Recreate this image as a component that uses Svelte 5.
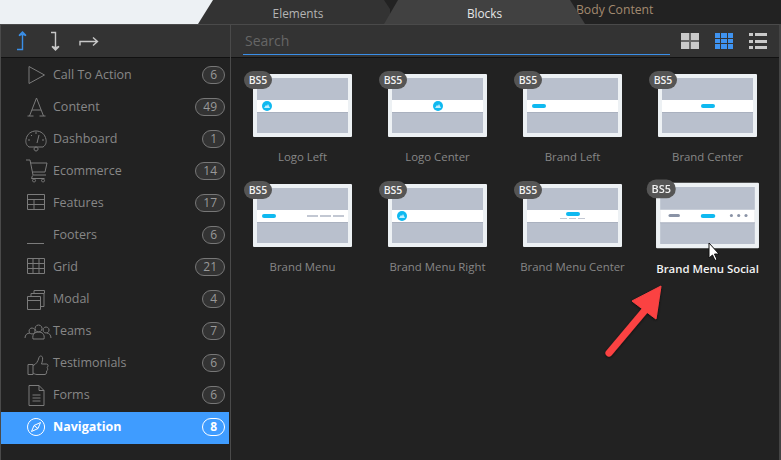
<script>
	const icons = {
		play: 'M5 3.500v17L20.500 12z',
		type: 'M3.500 21h6M15.500 21h6M5.500 21L12.500 3l7 18M8 15h9',
		gauge: 'M5 20h14c3-2 3.500-5 3-7.500C21 7 17 4 12 4S3 7 2 12.500c-.5 2.500 0 5.500 3 7.500zM12 20a2 2 0 1 0 .1 0M13 16l2-8M4 13h2M18 13h2M7 8l1 1M12 5v2',
		cart: 'M2 1h4l3 15h13M6.500 4H23l-2 9H8.500M10 20a1.500 1.500 0 1 0 .1 0zM19 20a1.500 1.500 0 1 0 .1 0zM8.500 16.500l-1 3h13',
		table: 'M3.500 3.500h17v15h-17zM3.500 8.500h17M3.500 13.500h17M10 8.500v10',
		footer: 'M3 20.500h17',
		grid: 'M3.500 3.500h17v15h-17zM3.500 8.500h17M3.500 13.500h17M9 3.500v15M15 3.500v15',
		modal: 'M3.500 9.500h13v13h-13zM3.500 13.500h13M7 9.500V6.500h13v13h-3.500M10 6.500V3.500h10.500v3',
		teams: 'M8 9a3 3 0 1 0 .1 0M14.500 6a3.500 3.500 0 1 0 .1 0M22 8a3 3 0 1 0 .1 0M1 19c0-3 2-5 5-5M9 20c-1-5 2-7 5.500-7s6.500 2 5.500 7zM23 14c2 0 4 2 4 5',
		thumb: 'M4 13.500h5v10H4zM9 14.500c3-1 5-4 6-8 .5-2 3-2 3.500 0 .5 2-.5 5-1 6.500h5c2 0 2 3 .5 3.500 1 1 1 3-.5 3.500.5 1.500 0 3-1.500 3.500H13c-2 0-3-1-4-1.500',
		file: 'M5 2.500h10l5 5v15H5zM15 2.500v5h5M8.500 12h8M8.500 15h8M8.500 18h8',
		compass: 'M12 3.500a8.500 8.500 0 1 0 .1 0zM16.500 7.500l-6.500 3-2.500 6 6.500-3zM10 10.500l4 3'
	};

	const groups = [
		{ name: 'Call To Action', count: 6, icon: 'play' },
		{ name: 'Content', count: 49, icon: 'type' },
		{ name: 'Dashboard', count: 1, icon: 'gauge' },
		{ name: 'Ecommerce', count: 14, icon: 'cart' },
		{ name: 'Features', count: 17, icon: 'table' },
		{ name: 'Footers', count: 6, icon: 'footer' },
		{ name: 'Grid', count: 21, icon: 'grid' },
		{ name: 'Modal', count: 4, icon: 'modal' },
		{ name: 'Teams', count: 7, icon: 'teams' },
		{ name: 'Testimonials', count: 6, icon: 'thumb' },
		{ name: 'Forms', count: 6, icon: 'file' },
		{ name: 'Navigation', count: 8, icon: 'compass', active: true }
	];

	const blocks = [
		{ name: 'Logo Left', kind: 'logo-left' },
		{ name: 'Logo Center', kind: 'logo-center' },
		{ name: 'Brand Left', kind: 'brand-left' },
		{ name: 'Brand Center', kind: 'brand-center' },
		{ name: 'Brand Menu', kind: 'brand-menu' },
		{ name: 'Brand Menu Right', kind: 'menu-right' },
		{ name: 'Brand Menu Center', kind: 'menu-center' },
		{ name: 'Brand Menu Social', kind: 'menu-social', hover: true }
	];
</script>

<div class="window">
	<div class="tabs">
		<div class="blank"></div>
		<div class="tab elements">Elements</div>
		<div class="tab blocks">Blocks</div>
		<div class="body-content">Body Content</div>
	</div>

	<div class="panel">
		<aside class="side">
			<div class="side-head">
				<svg width="24" height="22" viewBox="0 0 24 22" class="blue">
					<path d="M1 18.500h5.500V3M3 4.500L6.500 1 10 4.500 6.500 3z" />
				</svg>
				<svg width="24" height="22" viewBox="0 0 24 22">
					<path d="M2 1.500h4.500V18M3 15.500l3.500 3.500 3.500-3.500-3.500 1.500z" />
				</svg>
				<svg width="24" height="22" viewBox="0 0 24 22">
					<path d="M-2 14.500v-4h17.500M11 6.500l4.500 4-4.500 4" />
				</svg>
			</div>
			<ul>
				{#each groups as g}
					<li class:active={g.active}>
						<svg class="icon" width="28" height="24" viewBox="0 0 28 24"><path d={icons[g.icon]} /></svg>
						<span class="name">{g.name}</span>
						<span class="count">{g.count}</span>
					</li>
				{/each}
			</ul>
		</aside>

		<main>
			<div class="main-head">
				<div class="search">Search</div>
				<div class="views">
					<div class="view large"><i></i><i></i><i></i><i></i></div>
					<div class="view medium"><i></i><i></i><i></i><i></i><i></i><i></i><i></i><i></i><i></i></div>
					<div class="view list"><i></i><b></b><i></i><b></b><i></i><b></b></div>
				</div>
			</div>
			<div class="grid">
				{#each blocks as b}
					<div class="block" class:hover={b.hover}>
						<div class="thumb">
							<span class="bs">BS5</span>
							<div class="bar {b.kind}">
								{#if b.kind.startsWith('logo') || b.kind === 'menu-right'}
									<span class="logo">
										<svg width="6" height="4" viewBox="0 0 6 4"><path d="M0 4l2-3 1 1 1-2 2 4z" /></svg>
									</span>
								{:else if b.kind === 'menu-social'}
									<span class="pill grey"></span>
									<span class="pill"></span>
									<span class="dots"><i></i><i></i><i></i></span>
								{:else if b.kind === 'menu-center'}
									<span class="pill"></span>
									<span class="links"><i></i><i></i><i></i></span>
								{:else}
									<span class="pill"></span>
									{#if b.kind === 'brand-menu'}
										<span class="links"><i></i><i></i><i></i></span>
									{/if}
								{/if}
							</div>
						</div>
						<div class="label">{b.name}</div>
					</div>
				{/each}
			</div>
		</main>
	</div>

	<svg class="overlay" width="781" height="460" viewBox="0 0 781 460">
		<defs>
			<filter id="soft" x="-30%" y="-30%" width="160%" height="160%">
				<feDropShadow dx="0" dy="1" stdDeviation="1.500" flood-color="#000" flood-opacity="0.6" />
			</filter>
		</defs>
		<g filter="url(#soft)">
			<path d="M609 353L646 309" stroke="#fb4343" stroke-width="7" stroke-linecap="round" fill="none" />
			<path d="M661 286L632 301 656 319z" fill="#fb4343" stroke="#fb4343" stroke-width="1" stroke-linejoin="round" />
		</g>
		<path d="M709 243v15l3.500-3 2.500 5.500 2-1-2.500-5.500h4.500z" fill="#fff" stroke="#111" stroke-width="1" />
	</svg>
</div>

<style>
	:global(body) {
		background: #222;
	}

	.window {
		position: relative;
		width: 781px;
		height: 460px;
		overflow: hidden;
		background: #222;
		font-family: "Open Sans", "Noto Sans", sans-serif;
		font-size: 12px;
	}

	.tabs {
		display: flex;
		height: 24px;
		background: #222;
	}

	.blank {
		width: 213px;
		margin-right: -15px;
		flex: none;
		background: #edf1f4;
	}

	.tab {
		height: 24px;
		box-sizing: border-box;
		flex: none;
		display: flex;
		align-items: center;
		justify-content: center;
		padding-top: 1px;
		font-size: 11.800px;
	}

	.elements {
		width: 192px;
		padding-left: 8px;
		background: #333;
		color: #b4b4b4;
		clip-path: polygon(0 100%, 15px 0, 186px 0, 192px 9px, 192px 100%);
	}

	.blocks {
		width: 201px;
		margin-left: -6px;
		background: #414141;
		color: #e6e6e6;
		clip-path: polygon(0 100%, 14px 0, 186px 0, 201px 100%);
	}

	.body-content {
		margin-left: -9px;
		line-height: 20px;
		font-size: 12.200px;
		color: #a28a70;
	}

	.panel {
		display: flex;
		height: 436px;
		border-top: 1px solid #4a4a4a;
		border-left: 1px solid #4a4a4a;
		border-right: 2px solid #444;
		box-sizing: border-box;
	}

	.side {
		width: 230px;
		flex: none;
		border-right: 1px solid #4a4a4a;
		box-sizing: border-box;
	}

	.side-head {
		display: flex;
		align-items: center;
		gap: 9px;
		height: 33px;
		box-sizing: border-box;
		padding: 1px 0 0 15px;
		background: #333;
		border-bottom: 1px solid #111;
	}

	.side-head svg {
		width: 24px;
		overflow: visible;
		fill: none;
		stroke: #c8c8c8;
		stroke-width: 1.400;
	}

	.side-head .blue {
		stroke: #3a8fe8;
	}

	ul {
		list-style: none;
		margin: 0;
		padding: 2px 0 0;
		width: 228px;
	}

	li {
		display: flex;
		align-items: center;
		height: 32px;
		padding: 0 4px 0 23px;
		box-sizing: border-box;
		color: #878787;
		font-size: 12.500px;
	}

	.icon {
		flex: none;
		margin: 0 1px 2px 0;
		fill: none;
		stroke: #7b7b7b;
		stroke-width: 1;
		overflow: visible;
	}

	.name {
		flex: 1;
		padding-bottom: 3px;
		white-space: nowrap;
	}

	.count {
		height: 16px;
		padding: 0 7px;
		margin-bottom: 2px;
		border: 1px solid #777;
		border-radius: 9px;
		background: #333;
		color: #999;
		font-size: 12px;
		line-height: 16px;
		text-align: center;
	}

	li.active {
		background: #3f9cff;
		color: #fff;
		font-weight: 700;
	}

	li.active .icon {
		stroke: #fff;
	}

	li.active .count {
		background: transparent;
		border-color: #fff;
		color: #fff;
	}

	main {
		flex: 1;
		min-width: 0;
	}

	.main-head {
		display: flex;
		align-items: center;
		height: 33px;
		box-sizing: border-box;
		padding-left: 12px;
		background: #333;
		border-bottom: 1px solid #111;
	}

	.search {
		width: 427px;
		height: 27px;
		margin-top: 1px;
		padding-left: 2px;
		box-sizing: border-box;
		border-bottom: 1.500px solid #3a8fe8;
		color: #666;
		font-size: 14px;
		line-height: 26px;
	}

	.views {
		display: flex;
		gap: 16px;
		margin-left: 11px;
	}

	.view {
		display: grid;
		width: 18px;
		height: 16px;
	}

	.view i {
		display: block;
		background: #c9c9c9;
	}

	.large {
		grid-template-columns: 1fr 1fr;
		grid-template-rows: 1fr 1fr;
		gap: 2px;
		background: #666;
	}

	.medium {
		grid-template-columns: repeat(3, 1fr);
		grid-template-rows: repeat(3, 1fr);
		gap: 1px;
	}

	.medium i {
		background: #3f93f0;
	}

	.list {
		grid-template-columns: 4px 1fr;
		grid-template-rows: repeat(3, 3px);
		gap: 3.500px 2px;
		align-content: center;
	}

	.list b {
		display: block;
		background: #c9c9c9;
	}

	.grid {
		display: grid;
		grid-template-columns: repeat(4, 135px);
		grid-auto-rows: 110px;
		padding: 16px 0 0 4px;
	}

	.block {
		display: flex;
		flex-direction: column;
		align-items: center;
	}

	.thumb {
		position: relative;
		display: flex;
		align-items: center;
		width: 99px;
		height: 63px;
		box-sizing: border-box;
		border: 4px solid #edf1f4;
		background: #b9c0cd;
		border-radius: 1px;
	}

	.block.hover .thumb {
		transform: scale(1.04);
	}

	.bs {
		position: absolute;
		left: -13px;
		top: -7px;
		width: 28px;
		height: 18px;
		border-radius: 9px;
		background: #555;
		color: #f2f2f2;
		font-size: 10.500px;
		font-weight: 600;
		line-height: 18px;
		text-align: center;
	}

	.bar {
		position: relative;
		display: flex;
		align-items: center;
		width: 100%;
		height: 12px;
		padding: 0 5px;
		box-sizing: border-box;
		background: #fff;
		box-shadow: 0 1px 0 #aab1bf;
	}

	.logo {
		display: flex;
		align-items: center;
		justify-content: center;
		width: 10px;
		height: 10px;
		border-radius: 50%;
		background: #0fb9f0;
	}

	.logo path {
		fill: #bfeeff;
	}

	.logo-center,
	.brand-center {
		justify-content: center;
	}

	.pill {
		display: block;
		width: 14px;
		height: 4px;
		border-radius: 2px;
		background: #0fb9f0;
	}

	.pill.grey {
		width: 11px;
		height: 3px;
		background: #8a93a6;
	}

	.links {
		display: flex;
		gap: 2px;
		margin-left: auto;
		margin-right: -1px;
	}

	.links i {
		display: block;
		width: 11px;
		height: 2px;
		background: #c3c8d3;
	}

	.brand-menu {
		justify-content: flex-start;
	}

	.menu-center {
		flex-direction: column;
		justify-content: center;
		gap: 2px;
	}

	.menu-center .links {
		margin: 0;
	}

	.menu-center .links i {
		width: 7px;
		height: 1.500px;
	}

	.menu-social {
		display: grid;
		grid-template-columns: 1fr auto 1fr;
		padding: 0 7px 0 8px;
	}

	.dots {
		display: flex;
		gap: 3.500px;
		justify-self: end;
	}

	.dots i {
		display: block;
		width: 3.500px;
		height: 3.500px;
		border-radius: 50%;
		background: #8a93a6;
	}

	.label {
		margin-top: 11px;
		line-height: 18px;
		font-size: 11.400px;
		color: #878787;
		white-space: nowrap;
	}

	.block.hover .label {
		margin-top: 13px;
		color: #f2f2f2;
		font-weight: 600;
	}

	.overlay {
		position: absolute;
		inset: 0;
		pointer-events: none;
	}
</style>
